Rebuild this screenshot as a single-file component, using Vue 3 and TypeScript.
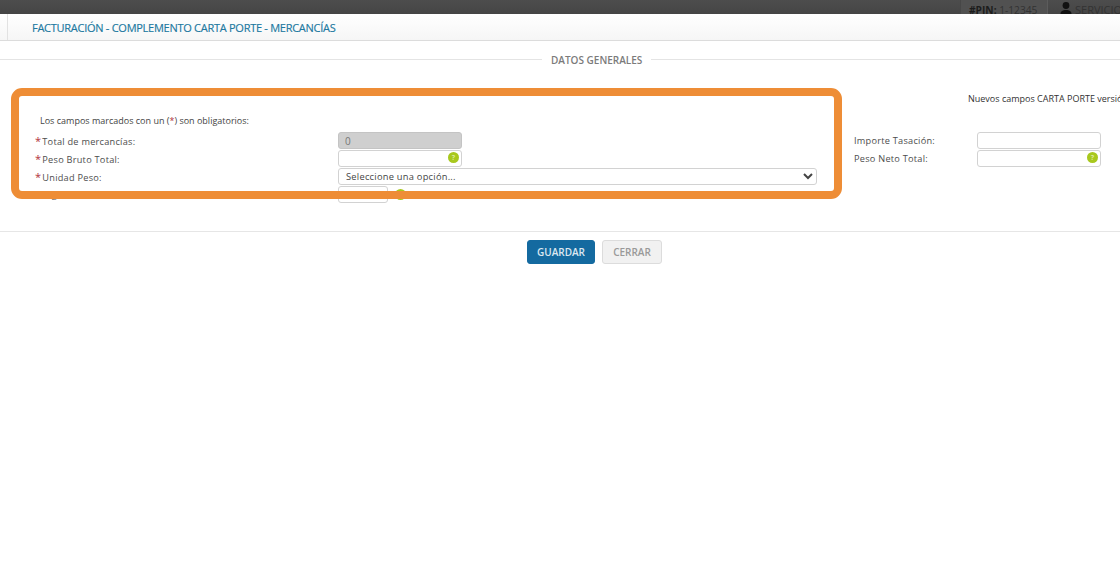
<script setup lang="ts">
const brand = 'FACTURACIÓN - COMPLEMENTO CARTA PORTE - MERCANCÍAS'
</script>

<template>
  <div class="page">
    <div class="topbar">
      <span class="pin"><b>#PIN:</b> 1-12345</span>
      <span class="user">
        <svg width="12" height="14" viewBox="0 0 12 14"><circle cx="6" cy="4.5" r="3.4" fill="#111" /><path d="M.5 13c0-3 2.500-4 5.500-4s5.500 1 5.500 4z" fill="#111" /></svg>
        SERVICIO
      </span>
    </div>
    <header class="head"><h1 class="title">{{ brand }}</h1></header>
    <div class="legend"><span>DATOS GENERALES</span></div>

    <form class="form" @submit.prevent>
      <p class="note">Nuevos campos CARTA PORTE versión 2.0</p>
      <p class="req">Los campos marcados con un (<em>*</em>) son obligatorios:</p>

      <label class="lab"><em>*</em>Total de mercancías:</label>
      <div class="narrow"><input class="inp off" value="0" disabled /></div>
      <label class="lab side">Importe Tasación:</label>
      <input class="inp" />

      <label class="lab"><em>*</em>Peso Bruto Total:</label>
      <div class="narrow"><input class="inp" /><i class="help inner">?</i></div>
      <label class="lab side">Peso Neto Total:</label>
      <div class="narrow"><input class="inp" /><i class="help inner">?</i></div>

      <label class="lab"><em>*</em>Unidad Peso:</label>
      <select class="inp sel"><option>Seleccione una opción...</option></select>
      <span /><span />

      <label class="lab plain">Logística Inversa (Recolección/Devolución):</label>
      <div class="short"><input class="inp" /><i class="help">?</i></div>
    </form>

    <div class="actions">
      <button class="btn primary">GUARDAR</button>
      <button class="btn">CERRAR</button>
    </div>

    <div class="mark" />
  </div>
</template>

<style>
html, body { margin: 0; background: #fff; overflow: hidden; }
</style>

<style scoped>
.page { position: relative; width: 1120px; height: 575px; overflow: hidden; background: #fff; font-family: "Open Sans", sans-serif; color: #444; font-size: 10px; }
.topbar { height: 14px; background: linear-gradient(#4d4d4d, #454545); display: flex; justify-content: flex-end; overflow: hidden; }
.pin { width: 88px; padding: 3px 0 0 8px; box-sizing: border-box; background: #515151; color: #333; font-size: 10.2px; line-height: 15px; white-space: nowrap; border-right: 1px solid #5c5c5c; border-left: 1px solid #474747; }
.pin b { color: #1c1c1c; }
.user { width: 72px; box-sizing: border-box; padding-left: 12px; display: flex; gap: 3px; color: #333; font-size: 11px; line-height: 19px; white-space: nowrap; }
.user svg { margin-top: 1px; flex: none; }
.head { height: 26px; background: linear-gradient(#fff, #f6f6f6); border-bottom: 1px solid #dcdcdc; padding-left: 7px; display: flex; align-items: stretch; }
.title { margin: 0; padding-left: 24px; border-left: 1px solid #e2e2e2; font-size: 11px; letter-spacing: -.27px; line-height: 27px; font-weight: 400; color: #20789f; -webkit-text-stroke: .15px #20789f; white-space: nowrap; }
.legend { height: 37px; display: flex; align-items: center; gap: 9px; color: #7b7b7b; font-size: 10px; font-weight: 600; }
.legend::before { content: ""; width: 542px; border-top: 1px solid #e4e4e4; }
.legend::after { content: ""; flex: 1; border-top: 1px solid #e4e4e4; }
.legend span { white-space: nowrap; }
.form { display: grid; grid-template-columns: 303px 479px 160px 124px; grid-template-rows: 14px 26px repeat(4, 18px); padding: 14px 0 0 35px; width: 1120px; height: 153px; box-sizing: border-box; align-content: start; }
.form > * { align-self: start; }
.note { grid-column: 1 / -1; margin: 0 0 0 933px; width: 185px; overflow: hidden; font-size: 9px; color: #333; line-height: 14px; white-space: nowrap; height: 14px; }
.req { grid-column: 1 / -1; margin: 8px 0 0 5px; font-size: 9px; color: #444; line-height: 14px; }
em { color: #b1313a; font-style: normal; }
.lab { font-size: 9.2px; letter-spacing: .25px; color: #4d4d4d; line-height: 17px; white-space: nowrap; }
.lab em { margin-right: 1px; font-size: 11px; }
.lab.side { margin-left: 37px; }
.lab.plain { padding-left: 6px; }
.narrow { position: relative; width: 124px; height: 17px; }
.short { display: flex; align-items: center; gap: 7px; height: 17px; }
.short .inp { width: 50px; flex: none; }
.inp { width: 100%; height: 17px; box-sizing: border-box; margin: 0; padding: 0 6px; border: 1px solid #d2d2d2; border-radius: 3px; background: #fff; font: 10px "Open Sans", sans-serif; color: #666; display: block; }
.off { background: #cfcfcf; border-color: #c4c4c4; color: #777; }
.sel { padding: 0 3px; color: #444; font-size: 9.3px; letter-spacing: .25px; }
.help { width: 11px; height: 11px; border-radius: 50%; background: #a8c81e; color: #dcea9c; font: 700 7px/11px "Open Sans", sans-serif; text-align: center; display: block; flex: none; }
.help.inner { position: absolute; right: 3px; top: 2px; }
.actions { display: flex; justify-content: center; gap: 7px; border-top: 1px solid #e6e6e6; padding: 8px 0 0 69px; }
.btn { width: 60px; height: 24px; box-sizing: border-box; border: 1px solid #dcdcdc; border-radius: 3px; background: #f1f1f1; color: #999; font: 600 10px "Open Sans", sans-serif; padding: 0; }
.primary { width: 68px; background: #146aa0; border-color: #146aa0; color: #dbe7f0; }
.mark { position: absolute; left: 11px; top: 88px; width: 831px; height: 111px; box-sizing: border-box; border: 8px solid #ee8d36; border-radius: 11px; pointer-events: none; }
</style>
